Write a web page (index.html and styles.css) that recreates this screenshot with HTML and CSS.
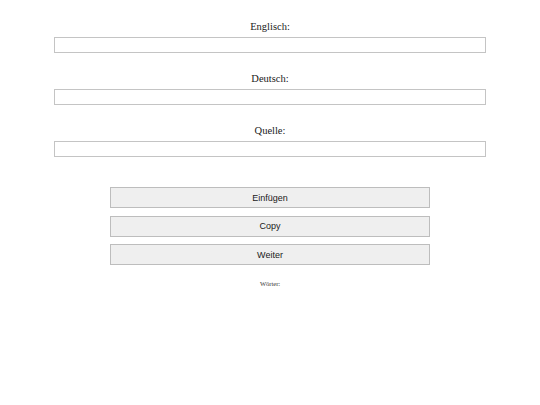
FILE: index.html
```html
<!DOCTYPE html>
<html lang="de">
<head>
<meta charset="utf-8">
<title>Vokabeln</title>
<link rel="stylesheet" href="styles.css">
</head>
<body>
<main class="page">
  <section class="fields">
    <div class="field">
      <label class="label" for="en">Englisch:</label>
      <input class="input" id="en" type="text">
    </div>
    <div class="field">
      <label class="label" for="de">Deutsch:</label>
      <input class="input" id="de" type="text">
    </div>
    <div class="field">
      <label class="label" for="src">Quelle:</label>
      <input class="input" id="src" type="text">
    </div>
  </section>
  <section class="actions">
    <button class="btn" type="button">Einfügen</button>
    <button class="btn" type="button">Copy</button>
    <button class="btn" type="button">Weiter</button>
  </section>
  <p class="count">Wörter:</p>
</main>
</body>
</html>
```
FILE: styles.css
```css
html, body {
  margin: 0;
  padding: 0;
  background: #ffffff;
}
.page {
  width: 540px;
  display: flex;
  flex-direction: column;
  align-items: center;
  font-family: "Liberation Serif", "Times New Roman", serif;
  color: #111;
  padding-top: 18px;
}
.fields {
  display: flex;
  flex-direction: column;
  align-items: center;
  gap: 17px;
}
.field {
  display: flex;
  flex-direction: column;
  align-items: center;
  gap: 1px;
}
.label {
  font-size: 10.5px;
  line-height: 18px;
  height: 18px;
  color: #1a1a1a;
}
.input {
  box-sizing: border-box;
  width: 432px;
  height: 16px;
  margin: 0;
  padding: 0;
  border: 1px solid #c4c4c4;
  background: #fff;
}
.actions {
  margin-top: 30px;
  display: flex;
  flex-direction: column;
  align-items: center;
  gap: 7.5px;
}
.btn {
  box-sizing: border-box;
  width: 320px;
  height: 21px;
  margin: 0;
  padding: 0;
  border: 1px solid #bdbdbd;
  background: #efefef;
  font-family: "Liberation Sans", Arial, sans-serif;
  font-size: 9px;
  color: #1a1a1a;
}
.count {
  margin: 14px 0 0;
  font-size: 6.5px;
  line-height: 9px;
  color: #333;
}
```
